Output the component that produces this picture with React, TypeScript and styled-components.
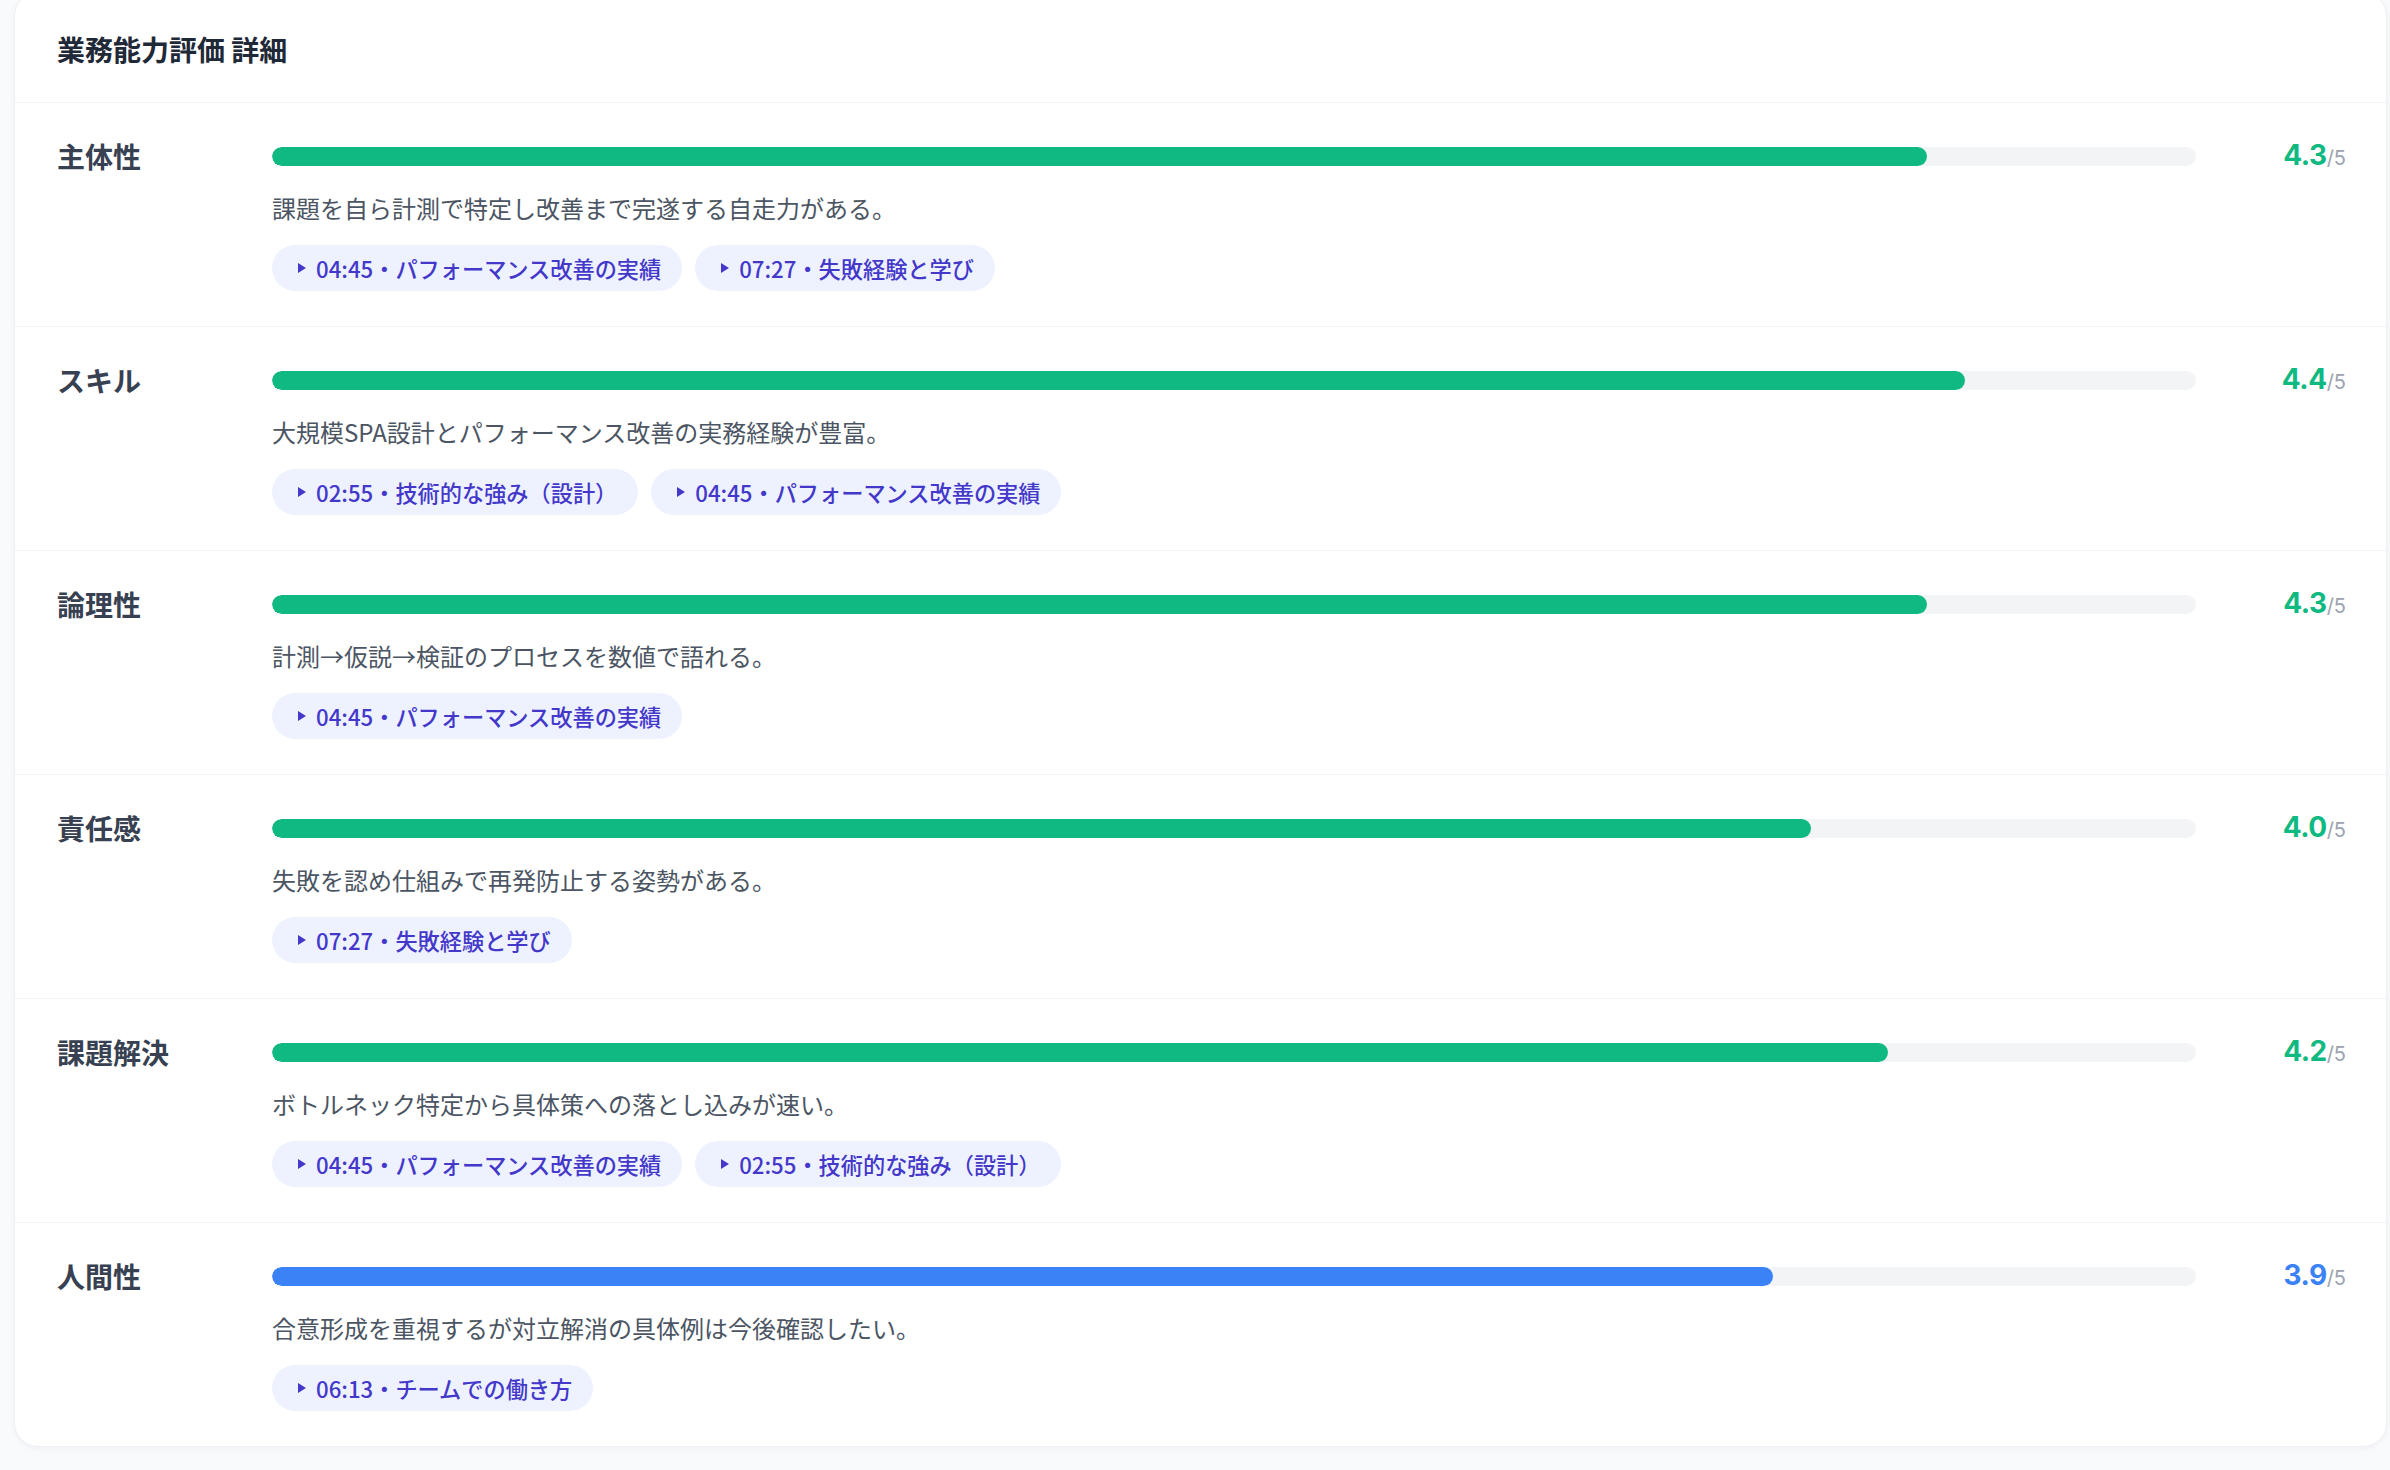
import React from 'react';
import styled, { createGlobalStyle } from 'styled-components';

interface IEvidence {
    time: string;
    title: string;
}

interface ISkill {
    name: string;
    score: number;
    comment: string;
    evidences: IEvidence[];
}

const skills: ISkill[] = [
    {
        name: '主体性',
        score: 4.3,
        comment: '課題を自ら計測で特定し改善まで完遂する自走力がある。',
        evidences: [
            { time: '04:45', title: 'パフォーマンス改善の実績' },
            { time: '07:27', title: '失敗経験と学び' },
        ],
    },
    {
        name: 'スキル',
        score: 4.4,
        comment: '大規模SPA設計とパフォーマンス改善の実務経験が豊富。',
        evidences: [
            { time: '02:55', title: '技術的な強み（設計）' },
            { time: '04:45', title: 'パフォーマンス改善の実績' },
        ],
    },
    {
        name: '論理性',
        score: 4.3,
        comment: '計測→仮説→検証のプロセスを数値で語れる。',
        evidences: [{ time: '04:45', title: 'パフォーマンス改善の実績' }],
    },
    {
        name: '責任感',
        score: 4.0,
        comment: '失敗を認め仕組みで再発防止する姿勢がある。',
        evidences: [{ time: '07:27', title: '失敗経験と学び' }],
    },
    {
        name: '課題解決',
        score: 4.2,
        comment: 'ボトルネック特定から具体策への落とし込みが速い。',
        evidences: [
            { time: '04:45', title: 'パフォーマンス改善の実績' },
            { time: '02:55', title: '技術的な強み（設計）' },
        ],
    },
    {
        name: '人間性',
        score: 3.9,
        comment: '合意形成を重視するが対立解消の具体例は今後確認したい。',
        evidences: [{ time: '06:13', title: 'チームでの働き方' }],
    },
];

const GREEN = '#10b981';
const BLUE = '#3b82f6';

const scoreColor = (score: number): string => (score >= 4 ? GREEN : BLUE);

const App = (): JSX.Element => {
    return (
        <SPage>
            <GlobalStyle />
            <SCard>
                <SHeader>
                    <STitle>業務能力評価 詳細</STitle>
                </SHeader>
                {skills.map((skill: ISkill) => {
                    const color = scoreColor(skill.score);
                    return (
                        <SRow key={skill.name}>
                            <SLabel>{skill.name}</SLabel>
                            <SBody>
                                <SBarLine>
                                    <STrack>
                                        <SFill $color={color} style={{ width: `${(skill.score / 5) * 100}%` }} />
                                    </STrack>
                                    <SScore>
                                        <SScoreValue $color={color}>{skill.score.toFixed(1)}</SScoreValue>
                                        <SScoreMax>/5</SScoreMax>
                                    </SScore>
                                </SBarLine>
                                <SComment>{skill.comment}</SComment>
                                <SChips>
                                    {skill.evidences.map((ev) => (
                                        <SChip key={ev.time + ev.title}>
                                            <STriangle />
                                            {ev.time}・{ev.title}
                                        </SChip>
                                    ))}
                                </SChips>
                            </SBody>
                        </SRow>
                    );
                })}
            </SCard>
        </SPage>
    );
};

const JP_FONT = `"Noto Sans CJK JP", "Noto Sans", sans-serif`;

const GlobalStyle = createGlobalStyle`
    html, body {
        margin: 0;
        padding: 0;
        background: #f8fafc;
    }
    body {
        font-family: ${JP_FONT};
        overflow: hidden;
    }
`;

const SPage = styled.div`
    padding: 0 3px 40px 14px;
    background: #f8fafc;
    min-height: 1470px;
    box-sizing: border-box;
`;

const SCard = styled.div`
    margin-top: -8px;
    background: #ffffff;
    border: 1px solid #eef0f3;
    border-radius: 24px;
    box-shadow: 0 2px 6px rgba(15, 23, 42, 0.04);
    overflow: hidden;
`;

const SHeader = styled.div`
    padding: 35px 42px 32px;
    border-bottom: 1px solid #f1f3f5;
`;

const STitle = styled.h2`
    margin: 0;
    font-size: 28px;
    line-height: 42px;
    font-weight: 700;
    color: #1f2937;
`;

const SRow = styled.div`
    display: grid;
    grid-template-columns: 215px 1fr;
    padding: 44px 40px 35px 42px;
    border-bottom: 1px solid #f1f3f5;

    &:last-child {
        border-bottom: none;
    }
`;

const SLabel = styled.div`
    font-size: 28px;
    line-height: 18px;
    font-weight: 700;
    color: #374151;
`;

const SBody = styled.div`
    display: flex;
    flex-direction: column;
    min-width: 0;
`;

const SBarLine = styled.div`
    display: flex;
    align-items: center;
    height: 19px;
`;

const STrack = styled.div`
    flex: 1;
    height: 19px;
    border-radius: 10px;
    background: #f3f4f6;
    overflow: hidden;
`;

const SFill = styled.div<{ $color: string }>`
    height: 100%;
    border-radius: 10px;
    background: ${(p) => p.$color};
`;

const SScore = styled.div`
    width: 110px;
    margin-left: 40px;
    text-align: right;
    white-space: nowrap;
    font-family: Inter, "Liberation Sans", Arial, sans-serif;
    line-height: 19px;
    margin-top: 2px;
`;

const SScoreValue = styled.span<{ $color: string }>`
    font-size: 28px;
    font-weight: 700;
    letter-spacing: -0.5px;
    color: ${(p) => p.$color};
`;

const SScoreMax = styled.span`
    font-size: 20px;
    color: #9ca3af;
`;

const SComment = styled.p`
    margin: 24px 0 0;
    font-size: 24px;
    line-height: 36px;
    color: #4b5563;
`;

const SChips = styled.div`
    display: flex;
    flex-wrap: wrap;
    gap: 13px;
    margin-top: 19px;
`;

const SChip = styled.button`
    display: inline-flex;
    align-items: center;
    gap: 10px;
    height: 46px;
    padding: 0 21px 0 26px;
    border: none;
    border-radius: 23px;
    background: #eef2ff;
    color: #4338ca;
    font-family: ${JP_FONT};
    font-size: 22.2px;
    font-weight: 500;
    cursor: pointer;
`;

const STriangle = styled.span`
    width: 0;
    height: 0;
    border-top: 5px solid transparent;
    border-bottom: 5px solid transparent;
    border-left: 8px solid #4338ca;
`;

export default App;
